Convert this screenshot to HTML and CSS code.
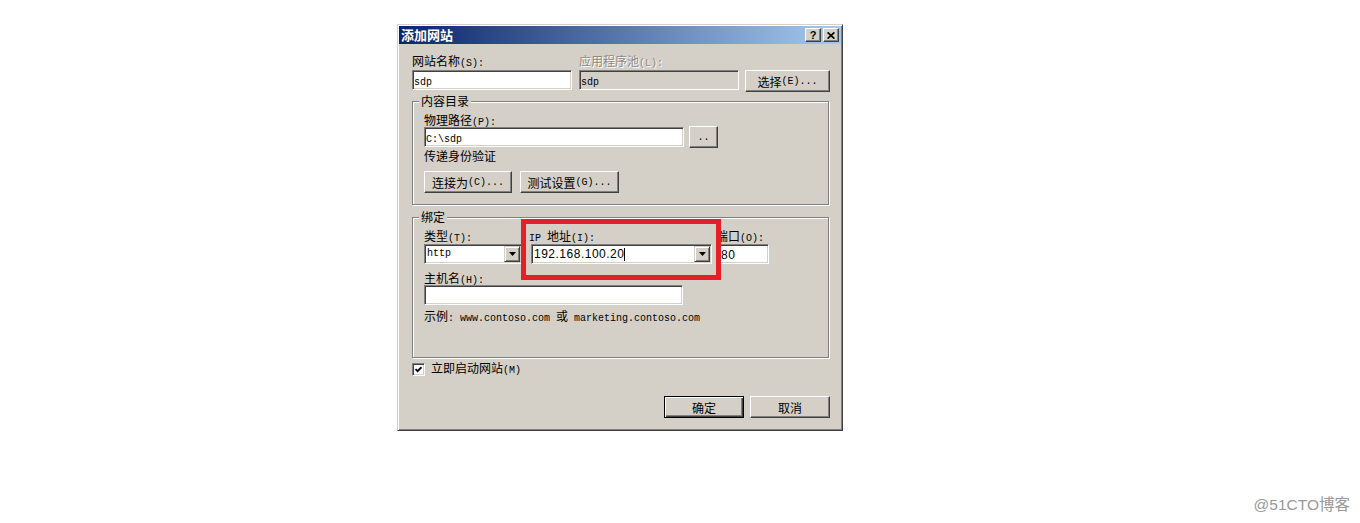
FILE: index.html
```html
<!DOCTYPE html>
<html lang="zh-CN">
<head>
<meta charset="utf-8">
<title>添加网站</title>
<link rel="stylesheet" href="styles.css">
</head>
<body>
<div class="page">
  <div class="dlg">
    <div class="titlebar">
      <span class="title">添加网站</span>
      <div class="tbtns">
        <div class="tbtn help">?</div>
        <div class="tbtn close"><svg width="8" height="7" viewBox="0 0 8 7"><path d="M0.6 0.4 L7.4 6.6 M7.4 0.4 L0.6 6.6" stroke="#000" stroke-width="1.7" fill="none"/></svg></div>
      </div>
    </div>
    <div class="body">
      <div class="row1">
        <div class="col c160 mr7">
          <div class="lbl">网站名称<span class="m">(S):</span></div>
          <div class="inp"><span class="m">sdp</span></div>
        </div>
        <div class="col c160 mr6">
          <div class="lbl dis">应用程序池<span class="m">(L):</span></div>
          <div class="inp ro"><span class="m">sdp</span></div>
        </div>
        <div class="btn b-select">选择<span class="m">(E)...</span></div>
      </div>

      <div class="grp g1">
        <div class="lgd">内容目录</div>
        <div class="lbl l-path">物理路径<span class="m">(P):</span></div>
        <div class="path-row">
          <div class="inp w260"><span class="m">C:\sdp</span></div>
          <div class="btn b-browse"><span class="m">..</span></div>
        </div>
        <div class="lbl l-pass">传递身份验证</div>
        <div class="btn-row">
          <div class="btn b-conn">连接为<span class="m">(C)...</span></div>
          <div class="btn b-test">测试设置<span class="m">(G)...</span></div>
        </div>
      </div>

      <div class="grp g2">
        <div class="lgd">绑定</div>
        <div class="bind-row">
          <div class="col w98">
            <div class="lbl">类型<span class="m">(T):</span></div>
            <div class="sel">
              <span class="txt"><span class="m">http</span></span>
              <div class="arrow"><svg width="7" height="4" viewBox="0 0 7 4"><path d="M0 0 H7 L3.5 4 Z" fill="#000"/></svg></div>
            </div>
          </div>
          <div class="col w181 ml9">
            <div class="lbl l-ip"><span class="m">IP </span>地址<span class="m">(I):</span></div>
            <div class="sel">
              <span class="txt"><span class="ip">192.168.100.20</span><span class="caret"></span></span>
              <div class="arrow"><svg width="7" height="4" viewBox="0 0 7 4"><path d="M0 0 H7 L3.5 4 Z" fill="#000"/></svg></div>
            </div>
          </div>
          <div class="col w50 ml7">
            <div class="lbl l-port">端口<span class="m">(O):</span></div>
            <div class="inp"><span class="ip">80</span></div>
          </div>
        </div>
        <div class="lbl l-host">主机名<span class="m">(H):</span></div>
        <div class="inp w259"></div>
        <div class="lbl l-ex">示例<span class="m">: www.contoso.com </span>或<span class="m"> marketing.contoso.com</span></div>
        <div class="hl"></div>
      </div>

      <div class="chk-row">
        <div class="chk"><svg width="7" height="7" viewBox="0 0 7 7"><path d="M0.5 3 L2.6 5.2 L6.5 1.2" stroke="#000" stroke-width="1.8" fill="none"/></svg></div>
        <span class="chk-lbl">立即启动网站<span class="m">(M)</span></span>
      </div>

      <div class="btm">
        <div class="btn b-ok">确定</div>
        <div class="btn b-cancel">取消</div>
      </div>
    </div>
  </div>
</div>
<div class="wm">@51CTO博客</div>
</body>
</html>
```
FILE: styles.css
```css
* { box-sizing: border-box; }
html, body { margin: 0; padding: 0; }
body {
  background: #fff;
  width: 1360px;
  height: 523px;
  position: relative;
  overflow: hidden;
  font-family: "Noto Sans CJK SC", "Liberation Sans", sans-serif;
  font-size: 12px;
  color: #000;
}
.page { padding: 24px 0 0 397px; }

.dlg {
  width: 446px;
  height: 407px;
  background: #d4d0c8;
  border: 1px solid;
  border-color: #d4d0c8 #404040 #404040 #d4d0c8;
  padding: 1px;
  box-shadow: inset 1px 1px #fff, inset -1px -1px #808080;
}

.titlebar {
  height: 18px;
  background: linear-gradient(to right, #0a246a, #a6caf0);
  display: flex;
  align-items: center;
  justify-content: space-between;
  padding: 0 2px 0 2px;
}
.title { color: #fff; font-weight: bold; font-size: 13px; line-height: 18px; }
.tbtns { display: flex; gap: 2px; }
.tbtn {
  width: 16px;
  height: 14px;
  background: #d4d0c8;
  border: 1px solid;
  border-color: #fff #404040 #404040 #fff;
  box-shadow: inset -1px -1px #808080;
  display: flex;
  align-items: center;
  justify-content: center;
}
.help { font: bold 11px "Liberation Sans", sans-serif; line-height: 12px; }

.body { padding: 10px 11px 0 13px; }
.lbl { height: 14px; line-height: 14px; white-space: nowrap; }
.m { font-family: "Liberation Mono", monospace; font-size: 10px; }
.col { display: flex; flex-direction: column; }
.row1 { display: flex; align-items: flex-start; }
.row1 .lbl { margin-bottom: 2px; }
.c160 { width: 160px; }
.mr7 { margin-right: 7px; }
.mr6 { margin-right: 6px; }

.inp {
  height: 20px;
  background: #fff;
  border: 1px solid;
  border-color: #808080 #fff #fff #808080;
  box-shadow: inset 1px 1px #404040, inset -1px -1px #d4d0c8;
  padding: 0 1px;
  line-height: 18px;
  white-space: nowrap;
  overflow: hidden;
}
.inp.ro { background: #d4d0c8; }
.dis { color: #8a8a8a; text-shadow: 1px 1px 0 #fff; }

.btn {
  height: 22px;
  background: #d4d0c8;
  border: 1px solid;
  border-color: #fff #404040 #404040 #fff;
  box-shadow: inset -1px -1px #808080;
  display: flex;
  align-items: center;
  justify-content: center;
  white-space: nowrap;
}
.b-select { width: 85px; margin-top: 16px; }

.grp {
  position: relative;
  width: 417px;
  border: 1px solid #808080;
  box-shadow: inset 1px 1px #fff, 1px 1px #fff;
  padding: 0 0 0 11px;
}
.g1 { margin-top: 9px; padding-bottom: 11px; }
.g2 { margin-top: 12px; padding-bottom: 34px; }
.lgd {
  width: max-content;
  margin: -8px 0 0 -5px;
  padding: 0 2px;
  background: #d4d0c8;
  height: 14px;
  line-height: 14px;
}

.l-path { margin-top: 5px; }
.path-row { display: flex; align-items: flex-start; }
.w260 { width: 260px; }
.b-browse { width: 29px; margin: -1px 0 0 5px; }
.l-pass { margin-top: 1px; }
.btn-row { display: flex; gap: 8px; margin-top: 8px; }
.b-conn { width: 88px; }
.b-test { width: 99px; }

.bind-row { display: flex; margin-top: 5px; }
.bind-row .lbl { margin-bottom: 1px; }
.w98 { width: 98px; }
.w181 { width: 181px; }
.w50 { width: 50px; }
.ml9 { margin-left: 9px; }
.ml7 { margin-left: 7px; }
.l-ip { margin-left: -2px; }
.l-port { margin-left: -3px; }

.sel {
  height: 20px;
  background: #fff;
  border: 1px solid;
  border-color: #808080 #fff #fff #808080;
  box-shadow: inset 1px 1px #404040, inset -1px -1px #d4d0c8;
  padding: 1px;
  display: flex;
  align-items: center;
}
.sel .txt { flex: 1; padding-left: 1px; white-space: nowrap; display: flex; align-items: center; line-height: 16px; }
.arrow {
  width: 16px;
  height: 16px;
  background: #d4d0c8;
  border: 1px solid;
  border-color: #d4d0c8 #404040 #404040 #d4d0c8;
  box-shadow: inset 1px 1px #fff, inset -1px -1px #808080;
  display: flex;
  align-items: center;
  justify-content: center;
}
.ip { font-family: "Liberation Sans", sans-serif; font-size: 12px; letter-spacing: 0.5px; }
.caret { display: inline-block; width: 1px; height: 13px; background: #000; margin-left: 0; }

.l-host { margin-top: 7px; }
.w259 { width: 259px; }
.l-ex { margin-top: 4px; }

.hl {
  position: absolute;
  left: 108px;
  top: 1px;
  width: 200px;
  height: 61px;
  border: 5px solid #e41f26;
}

.chk-row { display: flex; align-items: center; height: 14px; margin-top: 4px; }
.chk {
  width: 13px;
  height: 13px;
  background: #fff;
  border: 1px solid;
  border-color: #808080 #fff #fff #808080;
  box-shadow: inset 1px 1px #404040, inset -1px -1px #d4d0c8;
  display: flex;
  align-items: center;
  justify-content: center;
}
.chk-lbl { margin-left: 6px; line-height: 14px; }

.btm { display: flex; justify-content: flex-end; gap: 6px; margin-top: 20px; }
.b-ok {
  width: 80px;
  border: 1px solid #000;
  box-shadow: inset 1px 1px #fff, inset -1px -1px #404040, inset -2px -2px #808080;
}
.b-cancel { width: 80px; }

.wm {
  position: absolute;
  right: 10px;
  bottom: 9px;
  color: #999;
  font-family: "Liberation Sans", "Noto Sans CJK SC", sans-serif;
  font-size: 15.5px;
}
```
